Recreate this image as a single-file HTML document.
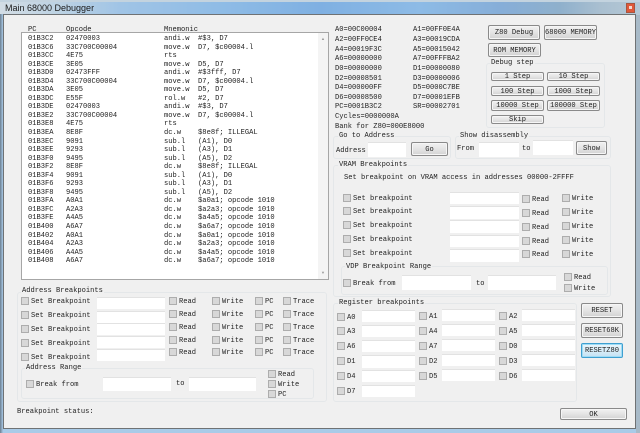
<!DOCTYPE html>
<html><head><meta charset="utf-8"><title>Main 68000 Debugger</title>
<style>
html,body{margin:0;padding:0}
body{width:640px;height:433px;position:relative;overflow:hidden;background:#a9cbe8}
#bg{position:absolute;left:0;top:0;width:640px;height:15px;background:linear-gradient(90deg,#d3dde5 0,#bcd2e3 60px,#a0c4e6 120px,#8fbce6 220px,#7fb0e2 320px,#8dbbe6 420px,#86aed8 500px,#8fb0cc 560px,#a9bfd0 600px,#b5c8d6 640px)}
#topline{position:absolute;left:0;top:0;width:640px;height:2px;background:#c3d3df}
#right{position:absolute;left:636px;top:15px;width:4px;height:418px;background:#a8bac8}
#cap{position:absolute;left:5px;top:3px;font:9px/10px "Liberation Sans",sans-serif;color:#1b1b1b;white-space:pre}
#close{position:absolute;left:626px;top:3px;width:9px;height:10px;background:#e0583a;border:1px solid #a8553f;box-sizing:border-box}
#close:after{content:"";position:absolute;left:2px;top:2px;width:3px;height:3px;background:#f2d8d0}
#left{position:absolute;left:0;top:14px;width:3px;height:419px;background:linear-gradient(90deg,#6d7f90,#a7c8e6)}
#client{position:absolute;left:4px;top:15px;width:631px;height:413px;background:#f0f0f0;box-shadow:0 0 0 1px #6f7274}
#ui{position:absolute;left:0;top:0;width:640px;height:433px;filter:blur(.35px)}
.t{position:absolute;font:7.1px/8px "Liberation Mono",monospace;color:#222;white-space:pre;margin-top:1px}
pre.t{margin:1px 0 0;line-height:8.54px}
.c{position:absolute;width:8px;height:8px;box-sizing:border-box;background:#d8d8d8;border:1px solid #adadad}
.i{position:absolute;background:#fff;box-sizing:border-box;border-top:1px solid #e2e2e2}
.g{position:absolute;box-sizing:border-box;border:1px solid #e4e7e9;border-radius:3px}
.l{background:#f0f0f0;padding:0 1px;margin-top:0}
.b{position:absolute;box-sizing:border-box;border:1px solid #8a8a8a;border-radius:2px;background:linear-gradient(#f2f2f2,#e4e4e4 50%,#d2d2d2);font:7.1px/8px "Liberation Mono",monospace;color:#222;text-align:center;display:flex;align-items:center;justify-content:center;white-space:pre;box-shadow:inset 0 0 0 1px #f6f6f6;padding-top:1px}
.h{border-color:#3f9fd0;background:linear-gradient(#eaf6fc,#d8edf8 50%,#c4e2f3);box-shadow:inset 0 0 0 1px #9fdcf5}
#list{position:absolute;left:21px;top:32px;width:308px;height:248px;background:#fff;box-sizing:border-box;border:1px solid #a6a6a6}
#sb{position:absolute;left:318px;top:33px;width:10px;height:246px;background:#f4f4f4}
.ar{position:absolute;left:321px;font:4px/4px "Liberation Sans",sans-serif;color:#999}
</style></head><body>
<div id="bg"></div><div id="topline"></div>
<div id="left"></div><div id="right"></div>
<div id="cap">Main 68000 Debugger</div>
<div id="close"></div>
<div id="client"></div>
<div id="ui">
<div class="t" style="left:28px;top:25px">PC</div>
<div class="t" style="left:66px;top:25px">Opcode</div>
<div class="t" style="left:164px;top:25px">Mnemonic</div>
<div id="list"></div>
<div id="sb"></div>
<div class="ar" style="top:37px">&#9650;</div>
<div class="ar" style="top:271px">&#9660;</div>
<pre class="t" style="left:28px;top:34px">01B3C2
01B3C6
01B3CC
01B3CE
01B3D0
01B3D4
01B3DA
01B3DC
01B3DE
01B3E2
01B3E8
01B3EA
01B3EC
01B3EE
01B3F0
01B3F2
01B3F4
01B3F6
01B3F8
01B3FA
01B3FC
01B3FE
01B400
01B402
01B404
01B406
01B408</pre>
<pre class="t" style="left:66px;top:34px">02470003
33C700C00004
4E75
3E05
02473FFF
33C700C00004
3E05
E55F
02470003
33C700C00004
4E75
8E8F
9091
9293
9495
8E8F
9091
9293
9495
A0A1
A2A3
A4A5
A6A7
A0A1
A2A3
A4A5
A6A7</pre>
<pre class="t" style="left:164px;top:34px">andi.w  #$3, D7
move.w  D7, $c00004.l
rts
move.w  D5, D7
andi.w  #$3fff, D7
move.w  D7, $c00004.l
move.w  D5, D7
rol.w   #2, D7
andi.w  #$3, D7
move.w  D7, $c00004.l
rts
dc.w    $8e8f; ILLEGAL
sub.l   (A1), D0
sub.l   (A3), D1
sub.l   (A5), D2
dc.w    $8e8f; ILLEGAL
sub.l   (A1), D0
sub.l   (A3), D1
sub.l   (A5), D2
dc.w    $a0a1; opcode 1010
dc.w    $a2a3; opcode 1010
dc.w    $a4a5; opcode 1010
dc.w    $a6a7; opcode 1010
dc.w    $a0a1; opcode 1010
dc.w    $a2a3; opcode 1010
dc.w    $a4a5; opcode 1010
dc.w    $a6a7; opcode 1010</pre>

<!-- Address breakpoints -->
<div class="g" style="left:17px;top:292px;width:310px;height:110px"></div>
<div class="t l" style="left:21px;top:287px">Address Breakpoints</div>
<div class="c" style="left:21px;top:297px"></div><div class="t" style="left:31px;top:297px">Set Breakpoint</div>
<div class="c" style="left:21px;top:311px"></div><div class="t" style="left:31px;top:311px">Set Breakpoint</div>
<div class="c" style="left:21px;top:325px"></div><div class="t" style="left:31px;top:325px">Set Breakpoint</div>
<div class="c" style="left:21px;top:339px"></div><div class="t" style="left:31px;top:339px">Set Breakpoint</div>
<div class="c" style="left:21px;top:353px"></div><div class="t" style="left:31px;top:353px">Set Breakpoint</div>
<div class="i" style="left:97px;top:297px;width:68px;height:12px"></div>
<div class="i" style="left:97px;top:311px;width:68px;height:12px"></div>
<div class="i" style="left:97px;top:323px;width:68px;height:12px"></div>
<div class="i" style="left:97px;top:336px;width:68px;height:12px"></div>
<div class="i" style="left:97px;top:349px;width:68px;height:12px"></div>
<div class="c" style="left:169px;top:297px"></div><div class="t" style="left:179px;top:297px">Read</div>
<div class="c" style="left:169px;top:310px"></div><div class="t" style="left:179px;top:310px">Read</div>
<div class="c" style="left:169px;top:323px"></div><div class="t" style="left:179px;top:323px">Read</div>
<div class="c" style="left:169px;top:336px"></div><div class="t" style="left:179px;top:336px">Read</div>
<div class="c" style="left:169px;top:348px"></div><div class="t" style="left:179px;top:348px">Read</div>
<div class="c" style="left:212px;top:297px"></div><div class="t" style="left:222px;top:297px">Write</div>
<div class="c" style="left:212px;top:310px"></div><div class="t" style="left:222px;top:310px">Write</div>
<div class="c" style="left:212px;top:323px"></div><div class="t" style="left:222px;top:323px">Write</div>
<div class="c" style="left:212px;top:336px"></div><div class="t" style="left:222px;top:336px">Write</div>
<div class="c" style="left:212px;top:348px"></div><div class="t" style="left:222px;top:348px">Write</div>
<div class="c" style="left:255px;top:297px"></div><div class="t" style="left:265px;top:297px">PC</div>
<div class="c" style="left:255px;top:310px"></div><div class="t" style="left:265px;top:310px">PC</div>
<div class="c" style="left:255px;top:323px"></div><div class="t" style="left:265px;top:323px">PC</div>
<div class="c" style="left:255px;top:336px"></div><div class="t" style="left:265px;top:336px">PC</div>
<div class="c" style="left:255px;top:348px"></div><div class="t" style="left:265px;top:348px">PC</div>
<div class="c" style="left:283px;top:297px"></div><div class="t" style="left:293px;top:297px">Trace</div>
<div class="c" style="left:283px;top:310px"></div><div class="t" style="left:293px;top:310px">Trace</div>
<div class="c" style="left:283px;top:323px"></div><div class="t" style="left:293px;top:323px">Trace</div>
<div class="c" style="left:283px;top:336px"></div><div class="t" style="left:293px;top:336px">Trace</div>
<div class="c" style="left:283px;top:348px"></div><div class="t" style="left:293px;top:348px">Trace</div>

<div class="g" style="left:21px;top:368px;width:293px;height:31px"></div>
<div class="t l" style="left:25px;top:364px">Address Range</div>
<div class="c" style="left:26px;top:380px"></div><div class="t" style="left:36px;top:380px">Break from</div>
<div class="i" style="left:103px;top:377px;width:68px;height:14px"></div>
<div class="t" style="left:176px;top:379px">to</div>
<div class="i" style="left:189px;top:377px;width:67px;height:14px"></div>
<div class="c" style="left:268px;top:370px"></div><div class="t" style="left:278px;top:370px">Read</div>
<div class="c" style="left:268px;top:380px"></div><div class="t" style="left:278px;top:380px">Write</div>
<div class="c" style="left:268px;top:390px"></div><div class="t" style="left:278px;top:390px">PC</div>
<div class="t" style="left:17px;top:407px">Breakpoint status:</div>

<!-- Registers -->
<div class="t" style="left:335px;top:25px">A0=00C00004</div><div class="t" style="left:413px;top:25px">A1=00FF0E4A</div>
<div class="t" style="left:335px;top:35px">A2=00FF0CE4</div><div class="t" style="left:413px;top:35px">A3=00019CDA</div>
<div class="t" style="left:335px;top:45px">A4=00019F3C</div><div class="t" style="left:413px;top:45px">A5=00015042</div>
<div class="t" style="left:335px;top:54px">A6=00000000</div><div class="t" style="left:413px;top:54px">A7=00FFFBA2</div>
<div class="t" style="left:335px;top:64px">D0=00000000</div><div class="t" style="left:413px;top:64px">D1=00000080</div>
<div class="t" style="left:335px;top:74px">D2=00008501</div><div class="t" style="left:413px;top:74px">D3=00000006</div>
<div class="t" style="left:335px;top:83px">D4=000000FF</div><div class="t" style="left:413px;top:83px">D5=0000C7BE</div>
<div class="t" style="left:335px;top:93px">D6=00008500</div><div class="t" style="left:413px;top:93px">D7=00001EFB</div>
<div class="t" style="left:335px;top:102px">PC=0001B3C2</div><div class="t" style="left:413px;top:102px">SR=00002701</div>
<div class="t" style="left:335px;top:112px">Cycles=0000000A</div>
<div class="t" style="left:335px;top:122px">Bank for Z80=000E8000</div>

<div class="b" style="left:488px;top:25px;width:52px;height:15px">Z80 Debug</div>
<div class="b" style="left:544px;top:25px;width:53px;height:15px">68000 MEMORY</div>
<div class="b" style="left:488px;top:43px;width:53px;height:14px">ROM MEMORY</div>

<div class="g" style="left:486px;top:63px;width:119px;height:65px"></div>
<div class="t l" style="left:490px;top:59px">Debug step</div>
<div class="b" style="left:491px;top:72px;width:53px;height:9px">1 Step</div>
<div class="b" style="left:547px;top:72px;width:53px;height:9px">10 Step</div>
<div class="b" style="left:491px;top:86px;width:53px;height:10px">100 Step</div>
<div class="b" style="left:547px;top:86px;width:53px;height:10px">1000 Step</div>
<div class="b" style="left:491px;top:100px;width:53px;height:11px">10000 Step</div>
<div class="b" style="left:547px;top:100px;width:53px;height:11px">100000 Step</div>
<div class="b" style="left:491px;top:115px;width:53px;height:9px">Skip</div>

<div class="g" style="left:333px;top:136px;width:118px;height:23px"></div>
<div class="t l" style="left:338px;top:132px">Go to Address</div>
<div class="t" style="left:336px;top:146px">Address</div>
<div class="i" style="left:368px;top:142px;width:38px;height:15px"></div>
<div class="b" style="left:411px;top:142px;width:37px;height:14px">Go</div>

<div class="g" style="left:455px;top:136px;width:156px;height:23px"></div>
<div class="t l" style="left:459px;top:132px">Show disassembly</div>
<div class="t" style="left:457px;top:144px">From</div>
<div class="i" style="left:479px;top:142px;width:40px;height:15px"></div>
<div class="t" style="left:522px;top:144px">to</div>
<div class="i" style="left:533px;top:140px;width:40px;height:15px"></div>
<div class="b" style="left:576px;top:141px;width:31px;height:14px">Show</div>

<!-- VRAM -->
<div class="g" style="left:333px;top:165px;width:278px;height:132px"></div>
<div class="t l" style="left:338px;top:161px">VRAM Breakpoints</div>
<div class="t" style="left:344px;top:173px">Set breakpoint on VRAM access in addresses 00000-2FFFF</div>
<div class="c" style="left:343px;top:194px"></div><div class="t" style="left:353px;top:194px">Set breakpoint</div>
<div class="c" style="left:343px;top:207px"></div><div class="t" style="left:353px;top:207px">Set breakpoint</div>
<div class="c" style="left:343px;top:221px"></div><div class="t" style="left:353px;top:221px">Set breakpoint</div>
<div class="c" style="left:343px;top:235px"></div><div class="t" style="left:353px;top:235px">Set breakpoint</div>
<div class="c" style="left:343px;top:249px"></div><div class="t" style="left:353px;top:249px">Set breakpoint</div>
<div class="i" style="left:450px;top:192px;width:69px;height:12px"></div>
<div class="i" style="left:450px;top:206px;width:69px;height:13px"></div>
<div class="i" style="left:450px;top:220px;width:69px;height:13px"></div>
<div class="i" style="left:450px;top:235px;width:69px;height:12px"></div>
<div class="i" style="left:450px;top:249px;width:69px;height:13px"></div>
<div class="c" style="left:522px;top:195px"></div><div class="t" style="left:532px;top:195px">Read</div>
<div class="c" style="left:522px;top:209px"></div><div class="t" style="left:532px;top:209px">Read</div>
<div class="c" style="left:522px;top:223px"></div><div class="t" style="left:532px;top:223px">Read</div>
<div class="c" style="left:522px;top:237px"></div><div class="t" style="left:532px;top:237px">Read</div>
<div class="c" style="left:522px;top:250px"></div><div class="t" style="left:532px;top:250px">Read</div>
<div class="c" style="left:562px;top:194px"></div><div class="t" style="left:572px;top:194px">Write</div>
<div class="c" style="left:562px;top:208px"></div><div class="t" style="left:572px;top:208px">Write</div>
<div class="c" style="left:562px;top:222px"></div><div class="t" style="left:572px;top:222px">Write</div>
<div class="c" style="left:562px;top:236px"></div><div class="t" style="left:572px;top:236px">Write</div>
<div class="c" style="left:562px;top:250px"></div><div class="t" style="left:572px;top:250px">Write</div>

<div class="g" style="left:341px;top:266px;width:267px;height:29px"></div>
<div class="t l" style="left:345px;top:263px">VDP Breakpoint Range</div>
<div class="c" style="left:343px;top:279px"></div><div class="t" style="left:353px;top:279px">Break from</div>
<div class="i" style="left:402px;top:275px;width:69px;height:15px"></div>
<div class="t" style="left:476px;top:279px">to</div>
<div class="i" style="left:488px;top:275px;width:68px;height:15px"></div>
<div class="c" style="left:564px;top:273px"></div><div class="t" style="left:574px;top:273px">Read</div>
<div class="c" style="left:564px;top:284px"></div><div class="t" style="left:574px;top:284px">Write</div>

<!-- Register breakpoints -->
<div class="g" style="left:333px;top:303px;width:244px;height:99px"></div>
<div class="t l" style="left:338px;top:299px">Register breakpoints</div>
<div class="c" style="left:337px;top:313px"></div><div class="t" style="left:347px;top:313px">A0</div><div class="i" style="left:362px;top:310px;width:53px;height:12px"></div>
<div class="c" style="left:337px;top:327px"></div><div class="t" style="left:347px;top:327px">A3</div><div class="i" style="left:362px;top:325px;width:53px;height:12px"></div>
<div class="c" style="left:337px;top:342px"></div><div class="t" style="left:347px;top:342px">A6</div><div class="i" style="left:362px;top:340px;width:53px;height:12px"></div>
<div class="c" style="left:337px;top:357px"></div><div class="t" style="left:347px;top:357px">D1</div><div class="i" style="left:362px;top:355px;width:53px;height:13px"></div>
<div class="c" style="left:337px;top:372px"></div><div class="t" style="left:347px;top:372px">D4</div><div class="i" style="left:362px;top:370px;width:53px;height:12px"></div>
<div class="c" style="left:337px;top:387px"></div><div class="t" style="left:347px;top:387px">D7</div><div class="i" style="left:362px;top:385px;width:53px;height:12px"></div>
<div class="c" style="left:419px;top:312px"></div><div class="t" style="left:429px;top:312px">A1</div><div class="i" style="left:442px;top:309px;width:53px;height:12px"></div>
<div class="c" style="left:419px;top:327px"></div><div class="t" style="left:429px;top:327px">A4</div><div class="i" style="left:442px;top:324px;width:53px;height:12px"></div>
<div class="c" style="left:419px;top:342px"></div><div class="t" style="left:429px;top:342px">A7</div><div class="i" style="left:442px;top:339px;width:53px;height:12px"></div>
<div class="c" style="left:419px;top:357px"></div><div class="t" style="left:429px;top:357px">D2</div><div class="i" style="left:442px;top:354px;width:53px;height:12px"></div>
<div class="c" style="left:419px;top:372px"></div><div class="t" style="left:429px;top:372px">D5</div><div class="i" style="left:442px;top:369px;width:53px;height:12px"></div>
<div class="c" style="left:499px;top:312px"></div><div class="t" style="left:509px;top:312px">A2</div><div class="i" style="left:522px;top:309px;width:53px;height:12px"></div>
<div class="c" style="left:499px;top:327px"></div><div class="t" style="left:509px;top:327px">A5</div><div class="i" style="left:522px;top:324px;width:53px;height:12px"></div>
<div class="c" style="left:499px;top:342px"></div><div class="t" style="left:509px;top:342px">D0</div><div class="i" style="left:522px;top:339px;width:53px;height:12px"></div>
<div class="c" style="left:499px;top:357px"></div><div class="t" style="left:509px;top:357px">D3</div><div class="i" style="left:522px;top:354px;width:53px;height:12px"></div>
<div class="c" style="left:499px;top:372px"></div><div class="t" style="left:509px;top:372px">D6</div><div class="i" style="left:522px;top:369px;width:53px;height:12px"></div>

<div class="b" style="left:581px;top:303px;width:42px;height:15px">RESET</div>
<div class="b" style="left:581px;top:323px;width:42px;height:15px">RESET68K</div>
<div class="b h" style="left:581px;top:343px;width:42px;height:15px">RESETZ80</div>
<div class="b" style="left:560px;top:408px;width:67px;height:12px">OK</div>
</div>
</body></html>
